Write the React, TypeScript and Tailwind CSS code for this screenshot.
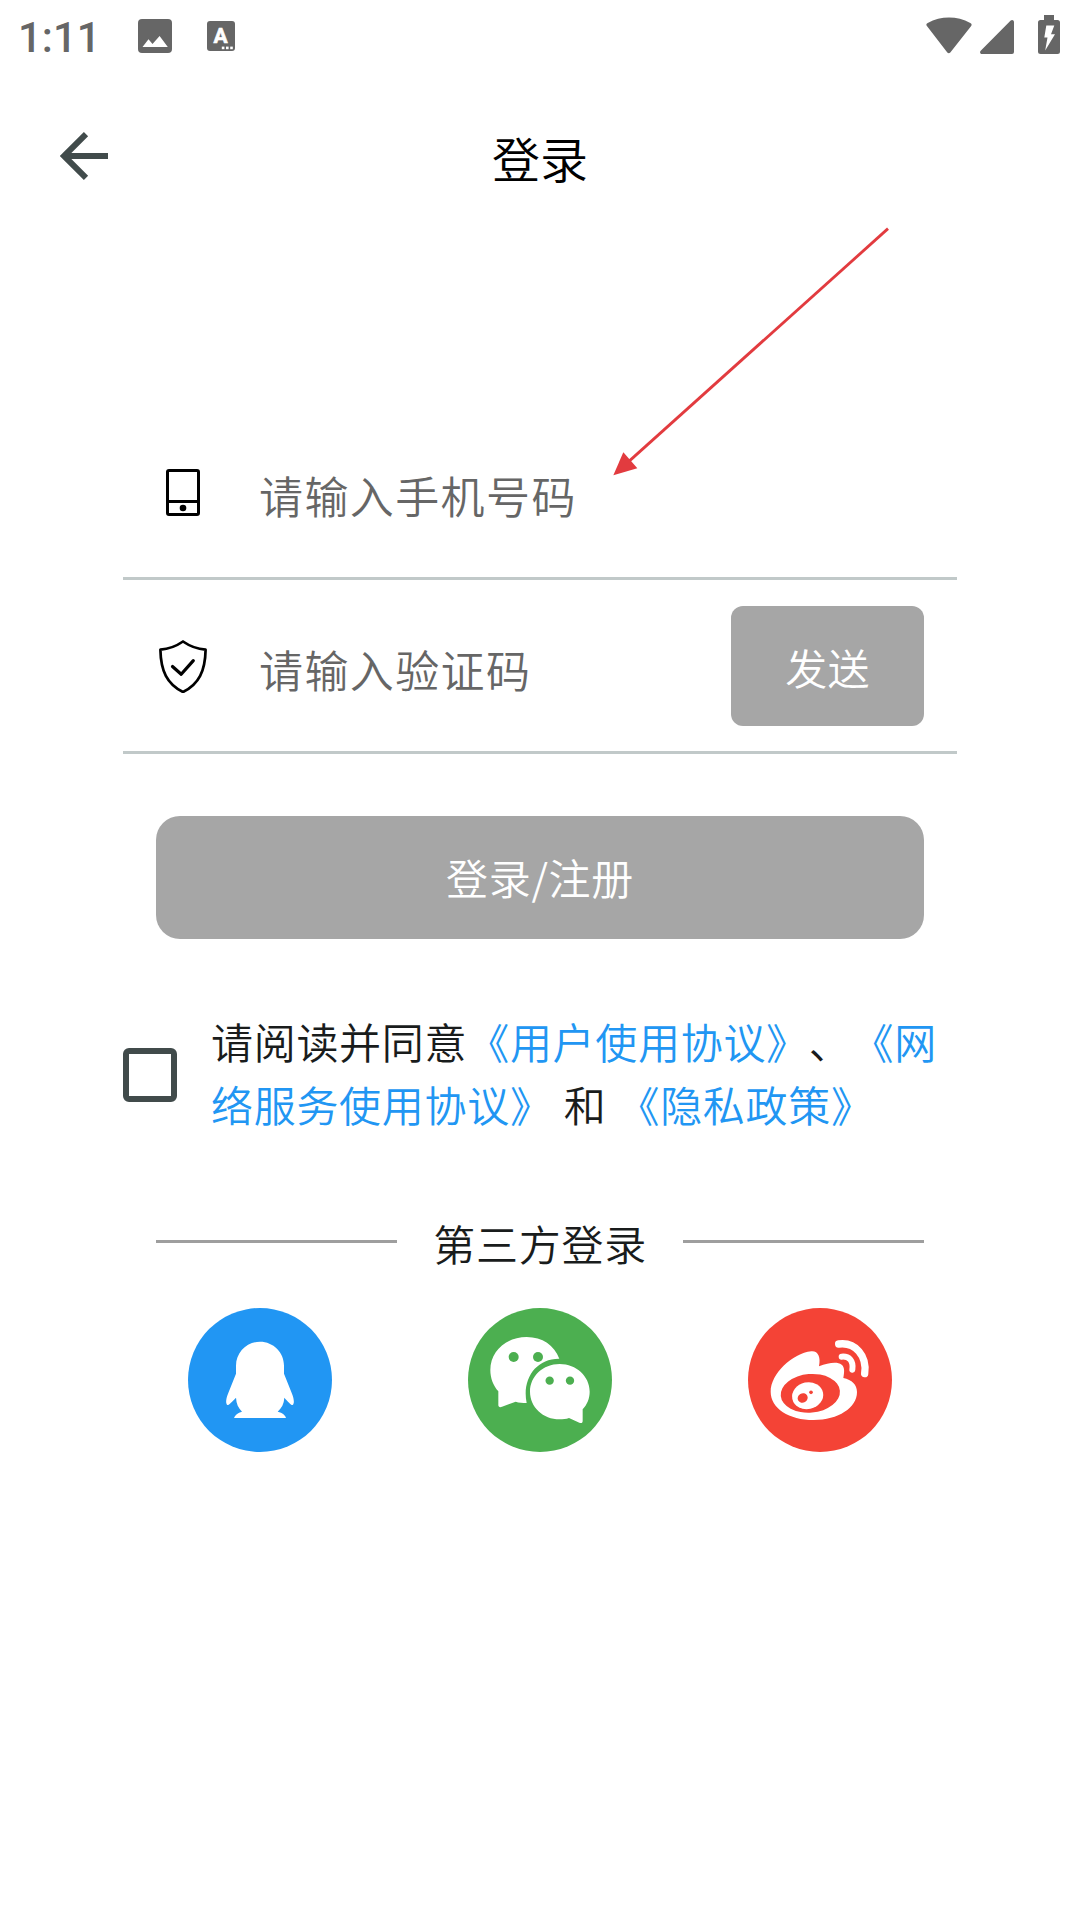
import { useState } from "react";
import type { ReactNode } from "react";

function StatusBar() {
  return (
    <div className="h-[72px] flex items-center justify-between pl-[18px] pr-5 text-[#666666]">
      <div className="flex items-center">
        <span className="w-[120px] font-['Roboto'] font-medium text-[42px] leading-[70px] pt-1">1:11</span>
        <svg className="w-[34px] h-[34px]" viewBox="0 0 34 34" fill="currentColor">
          <rect width="34" height="34" rx="4" />
          <path fill="#fff" d="M4.5 28 10.5 20.3 14.5 25 21.6 17 29.8 28Z" />
        </svg>
        <svg className="w-7 h-[30px] ml-[35px]" viewBox="0 0 28 30" fill="currentColor">
          <rect width="28" height="30" rx="3" />
          <text
            x="13.5"
            y="21.8"
            textAnchor="middle"
            fill="#fff"
            stroke="#fff"
            strokeWidth="0.6"
            className="font-['Roboto'] font-bold text-[21px]"
          >
            A
          </text>
          <rect x="14.8" y="25.6" width="2.6" height="2.6" fill="#fff" />
          <rect x="19" y="25.6" width="2.6" height="2.6" fill="#fff" />
          <rect x="23.2" y="25.6" width="2.6" height="2.6" fill="#fff" />
        </svg>
      </div>

      <div className="flex items-center">
        <svg className="w-[46px] h-[38px]" viewBox="0 0 46 38" fill="currentColor">
          <path d="M1.3 9.4C-.2 8.1.1 7 1.7 6 15-1.2 31-1.2 44.3 6c1.6 1 1.8 2.1.5 3.5L24.300 35.500c-.9 1.100-2.100 1.100-3 0Z" />
        </svg>
        <svg className="w-[34px] h-[34px] ml-2 mt-0.5" viewBox="0 0 34 34" fill="currentColor">
          <path d="M34 2v30a2 2 0 0 1-2 2H2C.2 34-.6 32 .7 30.700L30.700.6C32-.6 34 .2 34 2Z" />
        </svg>
        <svg className="w-[22px] h-10 ml-6 -mt-0.5" viewBox="0 0 22 40" fill="currentColor">
          <path d="M6 0h10v5h3.500A2.500 2.500 0 0 1 22 7.500V36.500a2.500 2.500 0 0 1-2.500 2.500h-17A2.500 2.500 0 0 1 0 36.500V7.500A2.500 2.500 0 0 1 2.500 5H6Z" />
          <path fill="#fff" d="M8.300 10.500h8L13 19.200h4L7.200 35.600 9.500 22.400H6.300Z" />
        </svg>
      </div>
    </div>
  );
}

function Header() {
  return (
    <header className="h-[168px] grid grid-cols-[1fr_auto_1fr] items-center px-[60px]">
      <button type="button" aria-label="返回" className="w-12 h-12">
        <svg className="w-12 h-12" viewBox="0 0 48 48" fill="none" stroke="#414b4b" strokeWidth="6">
          <path d="M48 24H5M26 2.200 4 24 26 45.800" />
        </svg>
      </button>
      <h1 className="pt-0.5 text-[48px] leading-[72px] text-black">登录</h1>
    </header>
  );
}

function PhoneIcon() {
  return (
    <svg className="w-[54px] h-[54px]" viewBox="0 0 54 54" fill="none" stroke="#000" strokeWidth="3">
      <rect x="11.500" y="5.500" width="31" height="44" rx="1.500" />
      <path d="M11 36.500h32" />
      <circle cx="27" cy="43" r="3.300" fill="#000" stroke="none" />
    </svg>
  );
}

function ShieldIcon() {
  return (
    <svg
      className="w-[54px] h-[54px]"
      viewBox="0 -1 54 54"
      fill="none"
      stroke="#000"
      strokeWidth="2.700"
      strokeLinejoin="round"
      strokeLinecap="round"
    >
      <path d="M27 1.500C20.500 6 13 9 4.400 9.700 4.800 31 11 44 27 52 43 44 49.200 31 49.600 9.700 41 9 33.500 6 27 1.500Z" />
      <path strokeWidth="3.200" d="M16.500 26.500 25.200 34.200 37.300 20.600" />
    </svg>
  );
}

function Field({
  icon,
  placeholder,
  children,
}: {
  icon: ReactNode;
  placeholder: string;
  children?: ReactNode;
}) {
  return (
    <div className="h-[174px] flex items-center border-b-3 border-[#c1c9c9] pl-[33px] pr-[33px]">
      {icon}
      <input
        placeholder={placeholder}
        className="flex-1 min-w-0 h-[84px] ml-[49px] pt-1.5 font-[350] text-[44px] leading-[66px] tracking-[1.4px] outline-none placeholder:text-[#666666]"
      />
      {children}
    </div>
  );
}

function Agreement() {
  const [checked, setChecked] = useState(false);

  return (
    <div className="flex items-center mt-[70px]">
      <button
        type="button"
        role="checkbox"
        aria-checked={checked}
        aria-label="同意协议"
        onClick={() => setChecked(!checked)}
        className={`w-[54px] h-[54px] mt-1.5 shrink-0 border-6 border-[#414b4b] rounded-[6px] ${
          checked ? "bg-[#414b4b]" : "bg-white"
        }`}
      />
      <p className="w-[746px] ml-[34px] text-[42px] leading-[63px] tracking-[0.7px] [word-spacing:1px] text-[#191c1c] [text-spacing-trim:space-all]">
        请阅读并同意<a className="text-[#2196f3]">《用户使用协议》</a>、
        <a className="text-[#2196f3]">《网
        <br />
        络服务使用协议》</a> 和 <a className="text-[#2196f3]">《隐私政策》</a>
      </p>
    </div>
  );
}

function QQIcon() {
  return (
    <svg className="w-36 h-36" viewBox="144 324 432 432">
      <circle cx="360" cy="540" r="216" fill="#2196f3" />
      <path
        fill="#fff"
        d="M360 425C320 425 288 457 288 497V521L264 581C257 599 257 610 262 615 267 616 276 605 288 593 289 611 295 624 306 635 293 638 285 646 282 654H438C436 646 428 638 413 635 425 624 432 611 433 593 444 605 453 616 458 615 463 610 463 599 456 581L432 521V497C432 457 400 425 360 425Z"
      />
    </svg>
  );
}

function WechatIcon() {
  return (
    <svg className="w-36 h-36" viewBox="984 324 432 432">
      <circle cx="1200" cy="540" r="216" fill="#4caf50" />
      <path
        fill="#fff"
        d="M1258 476C1243 436 1207 411 1160 411 1099 411 1051 454 1051 510 1051 535 1060 557 1075 574V615C1075 621 1080 623 1086 620L1127 605C1137 608 1148 609 1160 609 1145 537 1188 475 1258 476Z"
      />
      <path
        fill="#fff"
        d="M1259 492C1209 492 1170 529 1170 575 1170 621 1209 658 1259 658 1269 658 1278 657 1287 654L1318 668C1325 671 1328 668 1328 663V628C1341 614 1349 596 1349 575 1349 529 1309 492 1259 492Z"
      />
      <g fill="#4caf50">
        <circle cx="1121" cy="471" r="15" />
        <circle cx="1194" cy="471" r="15" />
        <circle cx="1229" cy="542" r="12.500" />
        <circle cx="1290" cy="542" r="12.500" />
      </g>
    </svg>
  );
}

function WeiboIcon() {
  return (
    <svg className="w-36 h-36" viewBox="54 54 432 432">
      <circle cx="270" cy="270" r="216" fill="#f44336" />
      <path
        fill="#fff"
        d="M244 184C264 182 273 201 267 229 295 219 320 214 335 224 345 232 343 247 340 264 366 270 381 284 381 306 381 353 325 390 251 390 177 390 122 355 122 305 122 252 187 190 244 184Z"
      />
      <ellipse cx="241" cy="310" rx="89" ry="58" fill="#f44336" transform="rotate(-5 241 310)" />
      <ellipse cx="233" cy="317" rx="47" ry="40" fill="#fff" transform="rotate(-12 233 317)" />
      <ellipse cx="218" cy="324" rx="15.500" ry="14" fill="#f44336" transform="rotate(-30 218 324)" />
      <circle cx="243" cy="307" r="5.500" fill="#f44336" />
      <g fill="none" stroke="#fff" strokeLinecap="round">
        <path strokeWidth="22" d="M326 162C376 155 412 198 404 251" />
        <path strokeWidth="18" d="M335 200C358 198 371 213 367 239" />
      </g>
    </svg>
  );
}

export default function App() {
  return (
    <div className="relative w-[1080px] h-[1920px] overflow-hidden bg-white font-['Noto_Sans_CJK_SC',sans-serif] font-[350]">
      <StatusBar />
      <Header />

      <main className="mt-[166px] px-[123px]">
        <Field icon={<PhoneIcon />} placeholder="请输入手机号码" />
        <Field icon={<ShieldIcon />} placeholder="请输入验证码">
          <button
            type="button"
            className="w-[193px] h-[120px] pt-0.5 rounded-xl bg-[#a6a6a6] text-white text-[42px] tracking-[0.3px]"
          >
            发送
          </button>
        </Field>

        <div className="px-[33px] mt-[62px]">
          <button
            type="button"
            className="w-full h-[123px] pb-0.5 rounded-3xl bg-[#a6a6a6] text-white text-[42px] tracking-[0.75px]"
          >
            登录/注册
          </button>
        </div>

        <Agreement />

        <div className="flex items-center gap-9 px-[33px] mt-[74px]">
          <div className="flex-1 h-[3px] bg-[#9e9e9e]" />
          <span className="pt-0.5 text-[42px] leading-[63px] tracking-[0.75px] text-[#191c1c]">第三方登录</span>
          <div className="flex-1 h-[3px] bg-[#9e9e9e]" />
        </div>

        <div className="flex justify-between px-[65px] mt-[34px]">
          <button type="button" aria-label="QQ">
            <QQIcon />
          </button>
          <button type="button" aria-label="微信">
            <WechatIcon />
          </button>
          <button type="button" aria-label="微博">
            <WeiboIcon />
          </button>
        </div>
      </main>

      {/* pointer towards the phone number field */}
      <svg
        className="absolute left-[600px] top-[220px] w-[300px] h-[270px] pointer-events-none"
        viewBox="0 0 900 810"
      >
        <path d="M864 26 80 730" stroke="#e23b3f" strokeWidth="8.500" />
        <path d="M40 766 70 697 112 745Z" fill="#e23b3f" />
      </svg>
    </div>
  );
}
